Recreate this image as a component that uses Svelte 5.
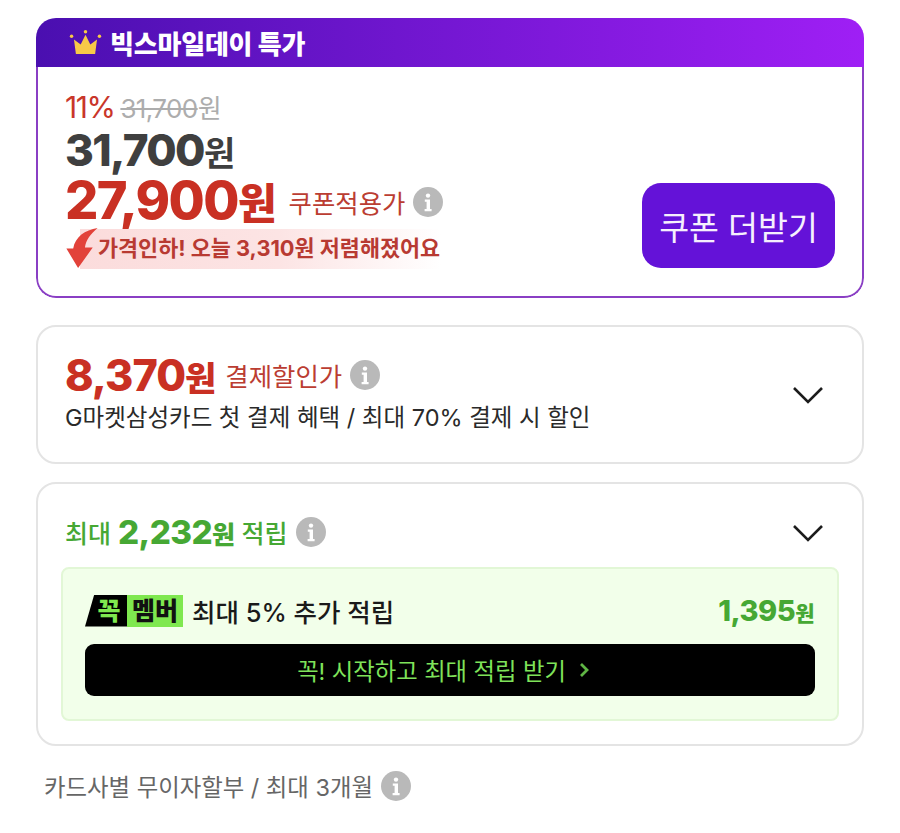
<script lang="ts">
    const cards = {
        title: "빅스마일데이 특가",
        coupon: "쿠폰 더받기",
    };
</script>

{#snippet info()}
    <svg class="info" viewBox="0 0 30 30" aria-hidden="true">
        <circle cx="15" cy="15" r="15" fill="#b9b9b9" />
        <circle cx="15" cy="8.6" r="2.2" fill="#fff" />
        <path d="M11.8 12.6h5.2v9.4h1.6v2.2h-7V22h2v-7.2h-1.8z" fill="#fff" />
    </svg>
{/snippet}

{#snippet chevron()}
    <svg class="chevron" viewBox="0 0 32 20" aria-hidden="true">
        <path d="M2 3l14 14L30 3" fill="none" stroke="#1c1c1c" stroke-width="2.6" />
    </svg>
{/snippet}

<div class="page">
    <section class="card deal">
        <header class="deal-head">
            <svg class="crown" viewBox="0 0 34 26" aria-hidden="true">
                <path d="M5 10l7 5 5-10 5 10 7-5-2 15H7z" fill="#f7c948" />
                <circle cx="2.5" cy="6.5" r="1.8" fill="#f7c948" />
                <circle cx="17" cy="1.8" r="1.8" fill="#f7c948" />
                <circle cx="31.5" cy="6.5" r="1.8" fill="#f7c948" />
            </svg>
            <span>{cards.title}</span>
        </header>
        <div class="deal-body">
            <div class="prices">
                <div class="orig">
                    <span class="pct">11%</span>
                    <span class="strike"><s>31,700</s>원</span>
                </div>
                <div class="now">31,700<small>원</small></div>
                <div class="final">
                    <strong>27,900<small>원</small></strong>
                    <span class="label">쿠폰적용가</span>
                    {@render info()}
                </div>
                <div class="drop">
                    <svg class="arrow" viewBox="0 0 34 42" aria-hidden="true">
                        <path d="M33 0C20 2 10 9 8 21H1L13 41 28 20H20C21 12 26 6 33 0Z" fill="#e2423a" />
                    </svg>
                    <span>가격인하! 오늘 3,310원 저렴해졌어요</span>
                </div>
            </div>
            <button class="coupon">{cards.coupon}</button>
        </div>
    </section>

    <section class="card pay">
        <div class="pay-text">
            <div class="pay-line">
                <strong>8,370<small>원</small></strong>
                <span class="label">결제할인가</span>
                {@render info()}
            </div>
            <p>G마켓삼성카드 첫 결제 혜택 / 최대 70% 결제 시 할인</p>
        </div>
        {@render chevron()}
    </section>

    <section class="card save">
        <div class="save-head">
            <div class="save-line">
                <span>최대</span>
                <strong>2,232<small>원</small></strong>
                <span>적립</span>
                {@render info()}
            </div>
            {@render chevron()}
        </div>
        <div class="member">
            <div class="member-row">
                <div class="member-left">
                    <div class="badge">
                        <span class="badge-k">꼭</span><span class="badge-m">멤버</span>
                    </div>
                    <span>최대 5% 추가 적립</span>
                </div>
                <b>1,395<small>원</small></b>
            </div>
            <button class="start">
                꼭! 시작하고 최대 적립 받기
                <svg viewBox="0 0 10 16" aria-hidden="true">
                    <path d="M2 2l6 6-6 6" fill="none" stroke="#5fb544" stroke-width="2.8" />
                </svg>
            </button>
        </div>
    </section>

    <div class="install">
        <span>카드사별 무이자할부 / 최대 3개월</span>
        {@render info()}
    </div>
</div>

<style>
    :global(body) {
        background: #fff;
    }

    .page {
        box-sizing: border-box;
        width: 900px;
        height: 833px;
        padding: 18px 36px 0 36px;
        overflow: hidden;
        font-family: Inter, "Noto Sans CJK KR", sans-serif;
        color: #222;
    }

    .card {
        box-sizing: border-box;
        width: 828px;
        border: 2px solid #e4e4e4;
        border-radius: 20px;
        background: #fff;
    }

    .info {
        width: 30px;
        height: 30px;
        flex: none;
    }

    .chevron {
        width: 32px;
        height: 20px;
        flex: none;
    }

    .deal {
        height: 280px;
        border: 0;
        overflow: hidden;
    }

    .deal-head {
        display: flex;
        align-items: center;
        gap: 8px;
        height: 49px;
        padding-left: 33px;
        background: linear-gradient(90deg, #4a0fb0, #9f1ff5);
        color: #fff;
        font-size: 26px;
        font-weight: 800;
        letter-spacing: -0.2px;
    }

    .crown {
        width: 33px;
        height: 25px;
    }

    .deal-body {
        display: flex;
        justify-content: space-between;
        align-items: flex-end;
        padding: 0 27px 27px 27px;
        height: 231px;
        box-sizing: border-box;
        border: 2px solid #8a3fc4;
        border-top: 0;
        border-radius: 0 0 20px 20px;
    }

    .prices {
        display: flex;
        flex-direction: column;
    }

    .orig {
        display: flex;
        align-items: baseline;
        gap: 6px;
        height: 38px;
        line-height: 34px;
    }

    .pct {
        color: #c9362a;
        font-size: 30px;
        letter-spacing: -1.5px;
    }

    .strike {
        color: #adadad;
        font-size: 26px;
        letter-spacing: -0.6px;
    }

    .now {
        height: 48px;
        line-height: 44px;
        font-size: 44px;
        font-weight: 800;
        color: #3f3f3f;
        letter-spacing: -1.6px;
    }

    .now small {
        font-size: 34px;
        font-weight: 700;
        letter-spacing: 0;
    }

    .final {
        display: flex;
        align-items: center;
        height: 52px;
    }

    .final strong {
        font-size: 52.4px;
        line-height: 52px;
        font-weight: 800;
        color: #c93023;
        letter-spacing: -1.6px;
        margin-right: 12px;
    }

    .final strong small {
        font-size: 42px;
        letter-spacing: 0;
    }

    .label {
        font-size: 25.4px;
        color: #bb3d32;
        margin-right: 8px;
    }

    .drop {
        position: relative;
        display: flex;
        align-items: center;
        width: 361px;
        height: 40px;
        margin-top: 1px;
        margin-left: 15px;
        padding: 0 0 5px 18px;
        box-sizing: border-box;
        background: linear-gradient(90deg, #fbdcdc 0%, #fce4e4 55%, #fff 100%);
        color: #b83a32;
        font-size: 21.8px;
        font-weight: 700;
        white-space: nowrap;
    }

    .arrow {
        position: absolute;
        left: -15px;
        top: -1px;
        width: 34px;
        height: 41px;
    }

    .coupon {
        width: 193px;
        height: 85px;
        margin-bottom: 1px;
        border: 0;
        border-radius: 19px;
        background: #6412d8;
        color: #f6effd;
        font: 400 32.5px Inter, "Noto Sans CJK KR", sans-serif;
    }

    .pay {
        display: flex;
        align-items: center;
        justify-content: space-between;
        height: 139px;
        margin-top: 27px;
        padding: 0 38px 0 27px;
    }

    .pay-line {
        display: flex;
        align-items: center;
        height: 46px;
        margin-top: -3px;
    }

    .pay-line strong {
        font-size: 43.2px;
        font-weight: 800;
        color: #c93023;
        letter-spacing: -1px;
        margin-right: 10px;
    }

    .pay-line strong small {
        font-size: 34px;
    }

    .pay p {
        margin: 4px 0 0;
        font-size: 23.5px;
        line-height: 32px;
        color: #2a2a2a;
    }

    .save {
        height: 264px;
        margin-top: 18px;
        padding: 0 23px;
    }

    .save-head {
        display: flex;
        align-items: center;
        justify-content: space-between;
        height: 83px;
        padding: 15px 15px 0 4px;
        box-sizing: border-box;
    }

    .save-line {
        display: flex;
        align-items: center;
        gap: 7px;
        color: #46a834;
        font-size: 25px;
        font-weight: 500;
        margin-top: -3px;
    }

    .save-line strong {
        font-size: 33.2px;
        font-weight: 800;
        letter-spacing: -0.6px;
    }

    .save-line strong small {
        font-size: 25px;
    }

    .save-line .info {
        margin-left: 2px;
    }

    .member {
        box-sizing: border-box;
        height: 154px;
        padding: 0 23px 0 22px;
        border: 2px solid #e2f7d6;
        border-radius: 8px;
        background: #f2ffea;
    }

    .member-row {
        display: flex;
        align-items: center;
        justify-content: space-between;
        height: 75px;
        padding-top: 8px;
        box-sizing: border-box;
    }

    .member-left {
        display: flex;
        align-items: center;
        gap: 9px;
        font-size: 25.5px;
        font-weight: 500;
        color: #1a1a1a;
    }

    .badge {
        display: flex;
        height: 32px;
        font-size: 25px;
        line-height: 32px;
        font-weight: 800;
    }

    .badge-k {
        width: 42px;
        padding-left: 6px;
        box-sizing: border-box;
        background: #000;
        color: #7fe84f;
        clip-path: polygon(22% 0, 100% 0, 100% 100%, 0 100%);
        text-align: center;
    }

    .badge-m {
        width: 56px;
        background: #7fe84f;
        color: #111;
        text-align: center;
    }

    .member-row b {
        color: #46a834;
        font-size: 29px;
        font-weight: 800;
        letter-spacing: -0.5px;
    }

    .member-row b small {
        font-size: 21px;
    }

    .start {
        display: flex;
        align-items: center;
        justify-content: center;
        gap: 13px;
        width: 730px;
        height: 52px;
        padding: 0 14px 0 0;
        border: 0;
        border-radius: 9px;
        background: #000;
        color: #7fe35a;
        font: 400 23.3px Inter, "Noto Sans CJK KR", sans-serif;
    }

    .start svg {
        width: 10px;
        height: 16px;
    }

    .install {
        display: flex;
        align-items: center;
        gap: 8px;
        margin-top: 23px;
        padding-left: 8px;
        font-size: 23.4px;
        color: #666;
    }
</style>
